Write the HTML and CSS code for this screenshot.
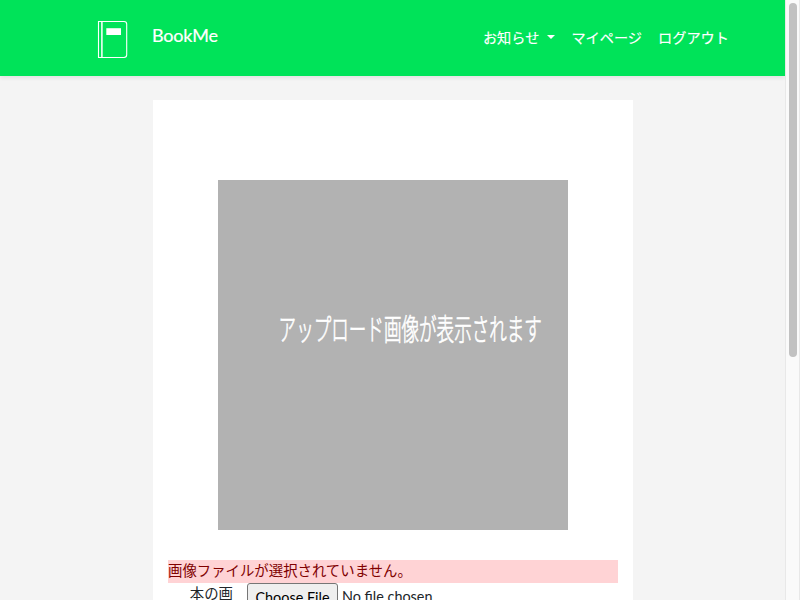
FILE: index.html
```html
<!DOCTYPE html>
<html lang="ja">
<head>
<meta charset="utf-8">
<title>BookMe</title>
<link rel="stylesheet" href="styles.css">
</head>
<body>
<div class="page">
  <nav class="navbar">
    <svg class="logo" width="32" height="40" viewBox="0 0 32 40" fill="none" stroke="#fff">
      <path d="M1.5 1.5H27Q29.7 1.5 29.7 4.2V34.8Q29.7 37.5 27 37.5H1.5Z" stroke-width="1.1"/>
      <path d="M4.9 1.5V37.5" stroke-width="1.5"/>
      <path d="M9.3 8.2H24V15H9.3Z" fill="#fff" stroke="none"/>
    </svg>
    <a class="brand">BookMe</a>
    <div class="menu">
      <a class="dropdown">お知らせ</a>
      <a>マイページ</a>
      <a>ログアウト</a>
    </div>
  </nav>
  <main class="card">
    <div class="preview"><span class="preview-text">アップロード画像が表示されます</span></div>
    <p class="error">画像ファイルが選択されていません。</p>
    <div class="row">
      <label class="label">本の画像</label>
      <div class="file"><button class="choose">Choose File</button><span class="none">No file chosen</span></div>
    </div>
  </main>
</div>
<div class="scrollbar"><div class="thumb"></div></div>
</body>
</html>
```
FILE: styles.css
```css
* { box-sizing: border-box; }
body {
  margin: 0;
  width: 800px;
  height: 600px;
  overflow: hidden;
  display: flex;
  background: #f4f4f4;
  color: #212529;
  font: 14.4px/23px Lato, "Noto Sans CJK JP", sans-serif;
}
.page { width: 785px; height: 600px; overflow: hidden; }
.navbar {
  height: 76px;
  display: flex;
  align-items: center;
  padding: 0 56px 0 97px;
  background: #00e359;
  color: #fff;
  box-shadow: 0 2px 4px rgba(0, 0, 0, .075);
}
.logo { margin-top: 4px; flex: none; }
.brand { margin: -6px 0 0 23px; font-size: 18px; letter-spacing: -.2px; -webkit-text-stroke: .2px #fff; }
.menu { display: flex; gap: 16px; margin: -2px 0 0 auto; font-size: 14.2px; white-space: nowrap; }
.menu a { -webkit-text-stroke: .15px #fff; }
.dropdown { display: flex; align-items: center; }
.dropdown::after {
  content: "";
  margin-left: 8px;
  border: 4.3px solid transparent;
  border-top-color: #fff;
  border-bottom: 0;
}
.card {
  width: 480px;
  height: 700px;
  margin: 24px 0 0 153px;
  padding: 80px 15px 0;
  background: #fff;
}
.preview {
  width: 350px;
  height: 350px;
  margin: 0 auto 30px;
  display: flex;
  align-items: center;
  justify-content: center;
  background: #b2b2b2;
}
.preview-text {
  flex: none;
  margin: -56px 0 0 34px;
  white-space: nowrap;
  color: #fff;
  font: 300 29.5px/40px "Noto Sans CJK JP", sans-serif;
  -webkit-text-stroke: .7px #fff;
  transform: scaleX(.595);
}
.error { margin: 0; height: 23px; line-height: 21px; background: #ffd3d5; color: #800000; }
.row { display: flex; }
.label { width: 65px; padding-left: 17px; line-height: 21px; text-align: right; word-break: break-all; }
.file { display: flex; align-items: flex-start; margin-left: 14px; white-space: nowrap; }
.choose {
  width: 91px;
  height: 28px;
  padding: 0;
  border: 1px solid #767676;
  border-radius: 3px;
  background: #efefef;
  color: #000;
  font: inherit;
  line-height: 25px;
}
.none { margin: 2px 0 0 4px; }
.scrollbar {
  width: 15px;
  height: 600px;
  padding: 3px 2px 0 3px;
  border: solid #e8e8e8;
  border-width: 0 1px;
  background: #fafafa;
}
.thumb { width: 8px; height: 354px; border-radius: 4px; background: #c1c1c1; }
```
